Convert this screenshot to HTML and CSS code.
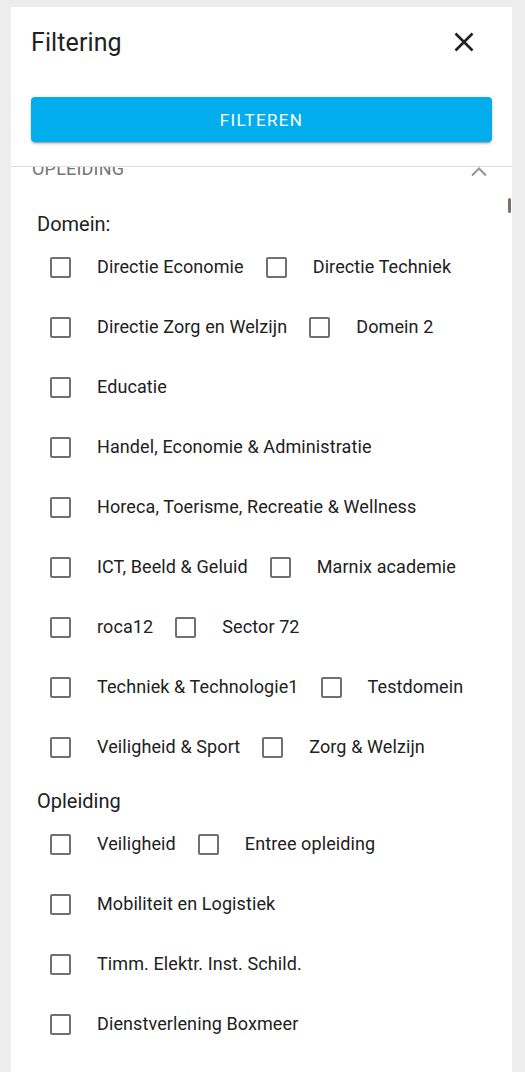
FILE: index.html
```html
<!DOCTYPE html>
<html lang="nl">
<head>
<meta charset="utf-8">
<title>Filtering</title>
<link rel="stylesheet" href="styles.css">
</head>
<body>
<div class="panel">
  <header class="head">
    <h1 class="title">Filtering</h1>
    <button class="close" aria-label="Sluiten">
      <svg width="32" height="32" viewBox="0 0 32 32"><path d="M7.5 6.5 L24.5 23.5 M24.5 6.5 L7.5 23.5" stroke="#222" stroke-width="2.6" fill="none"/></svg>
    </button>
  </header>
  <div class="actions">
    <button class="btn">Filteren</button>
  </div>
  <div class="scroller">
    <div class="thumb"></div>
    <section class="exp">
      <div class="exp-head">
        <span class="exp-title">Opleiding</span>
        <svg class="chev" width="16" height="16" viewBox="0 0 16 16"><polyline points="1,14.5 8,7.5 15,14.5" fill="none" stroke="#8f979b" stroke-width="2"/></svg>
      </div>
      <div class="exp-body">
        <div class="group-title">Domein:</div>
        <div class="opts">
          <label class="opt"><span class="box"></span><span class="lbl">Directie Economie</span></label>
          <label class="opt"><span class="box"></span><span class="lbl">Directie Techniek</span></label>
          <label class="opt"><span class="box"></span><span class="lbl">Directie Zorg en Welzijn</span></label>
          <label class="opt"><span class="box"></span><span class="lbl">Domein 2</span></label>
          <label class="opt"><span class="box"></span><span class="lbl">Educatie</span></label>
          <label class="opt"><span class="box"></span><span class="lbl">Handel, Economie &amp; Administratie</span></label>
          <label class="opt"><span class="box"></span><span class="lbl">Horeca, Toerisme, Recreatie &amp; Wellness</span></label>
          <label class="opt"><span class="box"></span><span class="lbl">ICT, Beeld &amp; Geluid</span></label>
          <label class="opt"><span class="box"></span><span class="lbl">Marnix academie</span></label>
          <label class="opt"><span class="box"></span><span class="lbl">roca12</span></label>
          <label class="opt"><span class="box"></span><span class="lbl">Sector 72</span></label>
          <label class="opt"><span class="box"></span><span class="lbl">Techniek &amp; Technologie1</span></label>
          <label class="opt"><span class="box"></span><span class="lbl">Testdomein</span></label>
          <label class="opt"><span class="box"></span><span class="lbl">Veiligheid &amp; Sport</span></label>
          <label class="opt"><span class="box"></span><span class="lbl">Zorg &amp; Welzijn</span></label>
        </div>
        <div class="group-title group-next">Opleiding</div>
        <div class="opts">
          <label class="opt"><span class="box"></span><span class="lbl">Veiligheid</span></label>
          <label class="opt"><span class="box"></span><span class="lbl">Entree opleiding</span></label>
          <label class="opt"><span class="box"></span><span class="lbl">Mobiliteit en Logistiek</span></label>
          <label class="opt"><span class="box"></span><span class="lbl">Timm. Elektr. Inst. Schild.</span></label>
          <label class="opt"><span class="box"></span><span class="lbl">Dienstverlening Boxmeer</span></label>
        </div>
      </div>
    </section>
  </div>
</div>
</body>
</html>
```
FILE: styles.css
```css
html, body {
  margin: 0;
  height: 100%;
  overflow: hidden;
}
body {
  background: #ededed;
  padding: 7px 13px 0 11px;
  box-sizing: border-box;
  font-family: Roboto, "Liberation Sans", sans-serif;
  color: #212121;
}
.panel {
  background: #fff;
  height: 100%;
  display: flex;
  flex-direction: column;
  overflow: hidden;
}
.head {
  display: flex;
  align-items: center;
  justify-content: space-between;
  padding: 20px 20px 0 20px;
  height: 32px;
  flex: none;
}
.title {
  margin: 0;
  font-size: 25px;
  line-height: 32px;
  font-weight: 400;
  color: #212121;
  letter-spacing: 0.1px;
}
.close {
  width: 32px;
  height: 32px;
  padding: 0;
  margin-right: 12px;
  border: 0;
  background: transparent;
  display: flex;
}
.actions {
  padding: 38px 20px 24px 20px;
  border-bottom: 1px solid #dcdcdc;
  flex: none;
}
.btn {
  display: block;
  width: 100%;
  height: 45px;
  border: 0;
  border-radius: 4px;
  background: #02adee;
  color: #fff;
  font-family: Roboto, "Liberation Sans", sans-serif;
  font-size: 17px;
  font-weight: 400;
  letter-spacing: 1.3px;
  text-transform: uppercase;
  box-shadow: 0 3px 1px -2px rgba(0,0,0,.2), 0 2px 2px 0 rgba(0,0,0,.14), 0 1px 5px 0 rgba(0,0,0,.12);
}
.scroller {
  flex: 1;
  overflow: hidden;
  position: relative;
}
.thumb {
  position: absolute;
  top: 31px;
  right: 1px;
  width: 3px;
  height: 15px;
  border-radius: 1.5px;
  background: #7a716c;
}
.exp-head {
  margin-top: -22px;
  height: 48px;
  display: flex;
  align-items: center;
  justify-content: space-between;
  padding: 0 25px 0 21px;
}
.exp-title {
  font-size: 18px;
  line-height: 22px;
  text-transform: uppercase;
  color: #757575;
  letter-spacing: 0.2px;
}
.exp-body {
  padding: 19px 22px 0 26px;
}
.group-title {
  font-size: 20px;
  line-height: 24px;
  margin-bottom: 1px;
  color: #212121;
}
.group-next {
  margin-top: 12px;
}
.opts {
  display: flex;
  flex-wrap: wrap;
  padding-left: 13px;
}
.opt {
  display: flex;
  align-items: center;
  height: 60px;
  margin-right: 22px;
}
.box {
  width: 21px;
  height: 21px;
  box-sizing: border-box;
  border: 2px solid #707070;
  border-radius: 2px;
  flex: none;
}
.lbl {
  margin-left: 26px;
  font-size: 18px;
  line-height: 24px;
  letter-spacing: 0.1px;
  color: #212121;
  white-space: nowrap;
}
```
